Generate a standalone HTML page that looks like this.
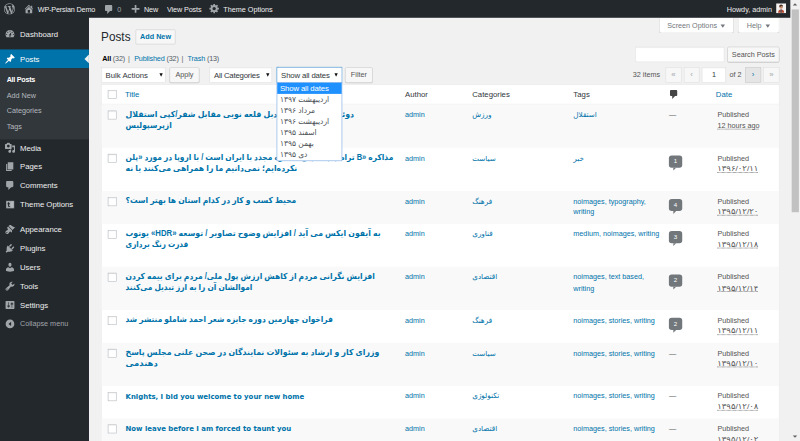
<!DOCTYPE html>
<html lang="en">
<head>
<meta charset="utf-8">
<title>Posts ‹ WP-Persian Demo — WordPress</title>
<style>
html,body{margin:0;padding:0;width:800px;height:441px;overflow:hidden;background:#f1f1f1}
#stage{position:absolute;left:0;top:0;width:1440px;height:794px;transform:scale(.55556);transform-origin:0 0;overflow:hidden;background:#f1f1f1;
 font-family:"Liberation Sans","DejaVu Sans",sans-serif;font-size:13px;line-height:1.4em;color:#444}
#stage *{box-sizing:border-box}
a{color:#0073aa;text-decoration:none}
svg{display:block}

/* ---------- admin bar ---------- */
#bar{position:absolute;left:0;top:0;width:1423px;height:32px;background:#23282d;color:#eee;font-size:13px;line-height:32px;z-index:5}
#bar .it{position:absolute;top:.8px;height:32px;white-space:nowrap;color:#eee}
#bar svg{position:absolute;fill:#a0a5aa}

/* ---------- sidebar ---------- */
#menubg{position:absolute;left:0;top:0;width:160px;height:794px;background:#23282d;z-index:3}
#menu{position:absolute;left:0;top:32px;width:160px;height:762px;background:#23282d;z-index:4}
#menu .mi{position:absolute;left:0;width:160px;height:34px;color:#eee;font-size:14px;line-height:34px}
#menu .mi span{position:absolute;left:36px;top:0;white-space:nowrap}
#menu .mi svg{position:absolute;left:8px;top:7px;width:20px;height:20px;fill:#a0a5aa}
#menu .cur{background:#0073aa;color:#fff}
#menu .cur svg{fill:#fff}
#menu .cur:after{content:"";position:absolute;right:0;top:9px;border:8px solid transparent;border-right-color:#f1f1f1;border-left-width:0}
#sub{position:absolute;left:0;top:91px;width:160px;height:128px;background:#32373c}
#sub a{position:absolute;left:12px;font-size:13px;line-height:18px;color:#b4b9be;white-space:nowrap}
#sub a.on{color:#fff;font-weight:700;letter-spacing:-.5px}

/* ---------- scrollbar ---------- */
#sb{position:absolute;left:1423px;top:0;width:17px;height:794px;background:#f1f1f1;z-index:9}
#sb i{position:absolute;left:2px;top:17px;width:13px;height:365px;background:#c1c1c1}
#sb b{position:absolute;left:4px;width:0;height:0;border:4.5px solid transparent}
#sb b.up{top:6px;border-bottom:4.5px solid #606060;border-top-width:0}
#sb b.dn{bottom:6px;border-top:4.5px solid #606060;border-bottom-width:0}

/* ---------- content ---------- */
.tab{position:absolute;top:32px;height:28px;background:#fff;border:1px solid #ccc;border-top:none;border-radius:0 0 4px 4px;color:#72777c;font-size:13px;line-height:28px;white-space:nowrap}
.tab span{position:absolute;top:0}
.tab em{position:absolute;top:12px;width:0;height:0;border:4.5px solid transparent;border-top:6px solid #72777c;border-bottom-width:0}
h1{position:absolute;left:182px;top:52px;margin:0;font-size:23px;font-weight:400;line-height:29px;color:#23282d;white-space:nowrap}
.pta{position:absolute;left:244px;top:53px;width:72px;height:27px;border:1px solid #ccc;border-radius:2px;background:#f7f7f7;color:#0073aa;font-weight:700;font-size:13px;line-height:25px;text-align:center;white-space:nowrap}
.sss{position:absolute;left:184px;top:93px;letter-spacing:-.27px;font-size:13px;line-height:26px;color:#666;white-space:nowrap;margin:0}
.sss b{color:#000;font-weight:700}
.sss .c{color:#555d66;font-weight:400}
.sss .s{color:#666;padding:0 4.5px 0 2px}
.inp{position:absolute;background:#fff;border:1px solid #ddd;box-shadow:inset 0 1px 2px rgba(0,0,0,.07)}
.btn{position:absolute;height:28px;border:1px solid #ccc;border-radius:3px;background:#f7f7f7;box-shadow:0 1px 0 #ccc;color:#555;font-size:13px;line-height:26px;text-align:center;white-space:nowrap}
.sel{position:absolute;top:121px;height:28px;background:#fff;border:1px solid #ddd;box-shadow:inset 0 1px 2px rgba(0,0,0,.07);color:#32373c;font-size:14px;line-height:26px;white-space:nowrap}
.sel span{position:absolute;left:7px;top:0}
.sel em{position:absolute;right:7px;top:10px;width:0;height:0;border:3.5px solid transparent;border-top:6px solid #111;border-bottom-width:0}
.sel.foc{border-color:#5b9dd9;box-shadow:0 0 2px rgba(30,140,190,.8)}
.pg{position:absolute;top:120.5px;height:28px;border:1px solid #ddd;background:#f7f7f7;color:#a0a5aa;font-size:14px;line-height:24px;text-align:center}
.pg.act{border-color:#ccc;background:#e5e5e5;color:#0073aa}
.t13{position:absolute;font-size:13px;line-height:28px;white-space:nowrap;color:#555}

/* dropdown list */
#dd{position:absolute;left:498px;top:148px;width:118px;height:142px;background:#fff;border:1px solid #6b9fe0;z-index:3;font-size:13.500px;color:#4a4f54}
#dd div{height:20px;line-height:20px;padding-left:5px;white-space:nowrap;text-align:left}
#dd div.hl{background:#1e90ff;color:#fff;font-size:14px;letter-spacing:-.25px}

/* table */
#tbl{position:absolute;left:182px;top:151.7px;width:1221px;border:1px solid #e5e5e5;border-bottom:none;box-shadow:0 1px 1px rgba(0,0,0,.04);background:#fff}
.row{position:relative;width:1219px}
.row.h{height:35.7px;border-bottom:1px solid #e1e1e1;font-size:14px;line-height:20px;color:#32373c}
.row.odd{background:#f9f9f9}
.row.r1{height:58.9px}
.row.r2{height:77.7px}
.row>*{position:absolute;top:8px}
.cb{left:11px;top:11px !important;width:16px;height:16px;border:1px solid #b4b9be;background:#fff;box-shadow:inset 0 1px 2px rgba(0,0,0,.1)}
.row.h .cb{top:9px !important}
.ti{left:43px;width:490px;font-size:14px;font-weight:700;line-height:19.5px;color:#0073aa;white-space:nowrap}
.ti .l{display:inline-block;transform-origin:0 50%}
.ti .l{position:relative;top:-1px}
.ti .en{font-family:"DejaVu Sans",sans-serif;font-size:13.5px;top:0}
.au{left:546px}
.ca{left:667px}
.tg{left:849px;width:165px}
.cm{left:1021px}
.da{left:1108.3px;color:#555}
.row.h .ti{font-weight:400;left:42px}
.row>*{font-size:13px;line-height:19.5px}
.row .ti{font-size:15px}
.row>.au,.row>.ca,.row>.tg,.row>.cm,.row>.da{top:8.8px}
.row.h>*{font-size:14px;line-height:20px;top:7px !important}
.da u{text-decoration:underline dotted;text-decoration-color:#555}
.da u.fa{display:inline-block;font-size:14px;transform:scaleX(1.09);transform-origin:0 50%}
.dash{color:#555}
.bub{display:block;position:relative;margin-top:5px;width:24px;height:22px;border-radius:5px;background:#72777c;color:#fff;font-size:11px;font-weight:400;line-height:21px;text-align:center}
.bub:after{content:"";position:absolute;left:8px;top:22px;border:0 solid transparent;border-top:5px solid #72777c;border-right-width:5px}
</style>
</head>
<body>
<div id="stage">

<!-- admin bar -->
<div id="bar">
  <svg style="left:7px;top:6px;width:20px;height:20px" viewBox="0 0 20 20"><path d="M20 10c0-5.51-4.49-10-10-10C4.48 0 0 4.49 0 10c0 5.52 4.48 10 10 10 5.51 0 10-4.48 10-10zM7.78 15.37L4.37 6.22c.55-.02 1.17-.08 1.17-.08.5-.06.44-1.13-.06-1.11 0 0-1.45.11-2.37.11-.18 0-.37 0-.58-.01C4.12 2.69 6.87 1.11 10 1.11c2.33 0 4.45.87 6.05 2.34-.68-.11-1.65.39-1.65 1.58 0 .74.45 1.36.9 2.1.35.61.55 1.36.55 2.46 0 1.49-1.4 5-1.4 5l-3.03-8.37c.54-.02.82-.17.82-.17.5-.05.44-1.25-.06-1.22 0 0-1.44.12-2.38.12-.87 0-2.33-.12-2.33-.12-.5-.03-.56 1.2-.06 1.22l.92.08 1.26 3.41zM17.41 10c.24-.64.74-1.87.43-4.25.7 1.29 1.05 2.71 1.05 4.25 0 3.29-1.73 6.24-4.4 7.78.97-2.59 1.94-5.2 2.92-7.78zM6.1 18.09C3.12 16.65 1.11 13.53 1.11 10c0-1.3.23-2.48.72-3.59C3.25 10.3 4.67 14.2 6.1 18.09zm4.03-6.63l2.58 6.98c-.86.29-1.76.45-2.71.45-.79 0-1.57-.11-2.29-.33.81-2.38 1.62-4.74 2.42-7.1z"/></svg>
  <svg style="left:42px;top:6px;width:20px;height:20px" viewBox="0 0 20 20"><path d="M16 8.5l1.53 1.53-1.06 1.06L10 4.62l-6.47 6.47-1.06-1.06L10 2.5l4 4v-2h2v4zm-6-2.46l6 5.99V18H4v-5.97zM12 17v-5H8v5h4z"/></svg>
  <span class="it" style="left:68px;letter-spacing:-.3px">WP-Persian Demo</span>
  <svg style="left:186px;top:7px;width:20px;height:20px" viewBox="0 0 20 20"><path d="M5 2h9c1.1 0 2 .9 2 2v7c0 1.1-.9 2-2 2h-2l-5 5v-5H5c-1.1 0-2-.9-2-2V4c0-1.1.9-2 2-2z"/></svg>
  <span class="it" style="left:211px;color:#a0a5aa">0</span>
  <svg style="left:234px;top:6px;width:20px;height:20px" viewBox="0 0 20 20"><path d="M17 8.5v3h-5.500v5.500h-3v-5.500H3v-3h5.500V3h3v5.500z"/></svg>
  <span class="it" style="left:259px">New</span>
  <span class="it" style="left:300.5px;letter-spacing:-.2px">View Posts</span>
  <svg style="left:376px;top:5px;width:20px;height:20px" viewBox="0 0 20 20"><path d="M18 12h-2.180c-.170.700-.440 1.350-.810 1.930l1.540 1.540-2.100 2.100-1.540-1.540c-.580.360-1.230.630-1.910.790V19H8v-2.180c-.68-.16-1.33-.43-1.910-.79l-1.540 1.540-2.120-2.120 1.540-1.540c-.36-.58-.63-1.230-.79-1.910H1V9.030h2.170c.16-.7.44-1.350.8-1.940L2.430 5.550l2.100-2.100 1.540 1.540c.58-.37 1.240-.64 1.930-.81V2h3v2.180c.68.160 1.330.430 1.910.790l1.540-1.540 2.120 2.120-1.540 1.540c.360.590.640 1.240.800 1.940H18V12zm-8.500 1.500c1.660 0 3-1.340 3-3s-1.340-3-3-3-3 1.340-3 3 1.340 3 3 3z"/></svg>
  <span class="it" style="left:402px">Theme Options</span>
  <span class="it" style="left:1308px">Howdy, admin</span>
  <svg style="left:1397px;top:6px;width:18px;height:18px" viewBox="0 0 18 18"><rect width="18" height="18" fill="#f4f2f0"/><path d="M3.500 17c0-4 2-6 5.500-6s5.500 2 5.500 6z" fill="#b3492e"/><path d="M8 11h2l-.3 6H8.300z" fill="#3d5a80"/><circle cx="9" cy="6.500" r="3.200" fill="#c48a6a"/><path d="M5.600 6.200c0-2.600 1.500-3.900 3.400-3.900s3.400 1.300 3.400 3.900c-1-.3-1.600-1.200-1.900-1.900-1 .9-3 1.600-4.900 1.900z" fill="#3b2a24"/></svg>
</div>

<!-- sidebar -->
<div id="menubg"></div>
<div id="menu">
  <div class="mi" style="top:12px"><svg viewBox="0 0 20 20"><path d="M3.760 16h12.480c1.100-1.370 1.760-3.110 1.760-5 0-4.420-3.580-8-8-8s-8 3.580-8 8c0 1.890.66 3.630 1.760 5zM10 4c.55 0 1 .45 1 1s-.45 1-1 1-1-.45-1-1 .45-1 1-1zM6 6c.55 0 1 .45 1 1s-.45 1-1 1-1-.45-1-1 .45-1 1-1zm8 0c.55 0 1 .45 1 1s-.45 1-1 1-1-.45-1-1 .45-1 1-1zm-5.370 5.550L12 7v6c0 1.100-.9 2-2 2s-2-.9-2-2c0-.57.24-1.080.63-1.450zM4 10c.55 0 1 .45 1 1s-.45 1-1 1-1-.45-1-1 .45-1 1-1zm12 0c.55 0 1 .45 1 1s-.45 1-1 1-1-.45-1-1 .45-1 1-1zm-5 3c0-.55-.45-1-1-1s-1 .45-1 1 .45 1 1 1 1-.45 1-1z"/></svg><span>Dashboard</span></div>
  <div class="mi cur" style="top:57px"><svg viewBox="0 0 20 20"><path d="M10.440 3.020l1.820-1.820 6.360 6.350-1.830 1.820c-1.050-.68-2.480-.57-3.410.36l-.75.75c-.92.93-1.040 2.350-.35 3.410l-1.830 1.820-2.410-2.410-2.800 2.790c-.42.42-3.380 2.710-3.800 2.290s1.860-3.390 2.280-3.810l2.790-2.790L4.100 9.360l1.830-1.820c1.050.69 2.480.57 3.400-.36l.75-.75c.93-.92 1.050-2.350.36-3.410z"/></svg><span>Posts</span></div>
  <div id="sub">
    <a class="on" style="top:12px">All Posts</a>
    <a style="top:40px">Add New</a>
    <a style="top:68px">Categories</a>
    <a style="top:96px">Tags</a>
  </div>
  <div class="mi" style="top:217px"><svg viewBox="0 0 20 20"><path d="M13 11V4c0-.55-.45-1-1-1h-1.670L9 1H5L3.670 3H2c-.55 0-1 .45-1 1v7c0 .55.45 1 1 1h10c.55 0 1-.45 1-1zM7 4.500c1.380 0 2.500 1.120 2.500 2.500S8.380 9.500 7 9.500 4.500 8.380 4.500 7 5.620 4.500 7 4.500zM14 6h5v10.500c0 1.380-1.120 2.500-2.500 2.500S14 17.880 14 16.500s1.120-2.500 2.500-2.500c.17 0 .34.020.5.050V9h-3V6zm-4 8.050V13h2v3.500c0 1.380-1.120 2.500-2.500 2.500S7 17.880 7 16.500 8.120 14 9.500 14c.17 0 .34.020.5.050z"/></svg><span>Media</span></div>
  <div class="mi" style="top:251px"><svg viewBox="0 0 20 20"><path d="M6 15V2h10v13H6zm-1 1h8v2H3V5h2v11z"/></svg><span>Pages</span></div>
  <div class="mi" style="top:285px"><svg viewBox="0 0 20 20"><path d="M5 2h9c1.100 0 2 .9 2 2v7c0 1.100-.9 2-2 2h-2l-5 5v-5H5c-1.100 0-2-.9-2-2V4c0-1.100.9-2 2-2z"/></svg><span>Comments</span></div>
  <div class="mi" style="top:319px"><svg viewBox="0 0 20 20"><rect x="3" y="3.500" width="14.500" height="13.500" fill="#9ea3a8"/><rect x="11" y="5" width="5" height="10.500" fill="#b4b9be"/><path d="M6.500 6h1.800v2h1.700v1.500H8.300v3.200h1.900v1.600H6.500V9.500H5.500V8h1z" fill="#23282d"/></svg><span>Theme Options</span></div>
  <div class="mi" style="top:363.7px"><svg viewBox="0 0 20 20"><path d="M14.480 11.060L7.410 3.990l1.500-1.500c.5-.56 2.300-.47 3.510.32 1.210.8 1.430 1.280 2.910 2.100 1.180.64 2.450 1.260 4.450.85zm-.71.71L6.700 4.700 4.930 6.470c-.39.39-.39 1.020 0 1.410l1.060 1.060c.39.39.39 1.030 0 1.420-.6.6-1.430 1.110-2.210 1.690-.35.26-.7.53-1.010.84-1.340 1.340-1.370 3.350-.19 4.530s3.190 1.150 4.530-.19c.31-.31.58-.66.85-1.020.57-.77 1.080-1.600 1.690-2.200.39-.39 1.020-.39 1.410 0l1.060 1.060c.39.39 1.020.39 1.410 0zM5.030 16.500c-.39.39-1.030.39-1.420 0s-.39-1.020 0-1.410c.39-.39 1.030-.39 1.420 0 .39.39.39 1.020 0 1.410z"/></svg><span>Appearance</span></div>
  <div class="mi" style="top:397.7px"><svg viewBox="0 0 20 20"><path d="M13.110 4.360L9.870 7.600 8 5.730l3.240-3.240c.35-.34 1.050-.2 1.560.32.52.51.66 1.210.31 1.550zm-8 1.770l.91-1.120 9.010 9.010-1.190.84c-.71.71-2.630 1.160-3.820 1.160H6.140L4.900 17.260c-.59.59-1.540.59-2.120 0-.59-.58-.59-1.530 0-2.120L4.020 13.900v-3.880c0-1.130.39-3.190 1.090-3.890zm7.260 3.970l3.240-3.240c.34-.35 1.040-.21 1.550.31.52.51.66 1.210.31 1.550l-3.240 3.250z"/></svg><span>Plugins</span></div>
  <div class="mi" style="top:431.7px"><svg viewBox="0 0 20 20"><path d="M10 9.250c-2.270 0-2.730-3.440-2.730-3.440C7 4.020 7.820 2 9.970 2c2.160 0 2.980 2.020 2.710 3.810 0 0-.41 3.440-2.680 3.440zm0 2.570L12.720 10c2.390 0 4.520 2.330 4.520 4.530v2.490s-3.650 1.130-7.240 1.130c-3.650 0-7.240-1.130-7.240-1.130v-2.490c0-2.250 1.940-4.480 4.470-4.480z"/></svg><span>Users</span></div>
  <div class="mi" style="top:466px"><svg viewBox="0 0 20 20"><path d="M16.680 9.770c-1.340 1.340-3.300 1.670-4.950.99l-5.410 6.520c-.99.99-2.590.99-3.580 0s-.99-2.590 0-3.570l6.520-5.420c-.68-1.650-.35-3.610.99-4.950 1.280-1.280 3.120-1.620 4.720-1.060l-2.890 2.890 2.820 2.820 2.860-2.870c.53 1.580.18 3.390-1.080 4.650zM3.810 16.210c.4.39 1.040.39 1.430 0 .4-.4.4-1.040 0-1.430-.39-.4-1.030-.4-1.430 0-.39.39-.39 1.030 0 1.430z"/></svg><span>Tools</span></div>
  <div class="mi" style="top:500px"><svg viewBox="0 0 20 20"><path d="M18 16V4c0-.55-.45-1-1-1H3c-.55 0-1 .45-1 1v12c0 .55.45 1 1 1h14c.55 0 1-.45 1-1zM8 11h1c.55 0 1 .45 1 1s-.45 1-1 1H8v1.500c0 .28-.22.5-.5.5s-.5-.22-.5-.5V13H6c-.55 0-1-.45-1-1s.45-1 1-1h1V5.500c0-.28.22-.5.5-.5s.5.220.5.500V11zm5-2h-1c-.55 0-1-.45-1-1s.45-1 1-1h1V5.500c0-.28.22-.5.5-.5s.5.220.5.500V7h1c.55 0 1 .45 1 1s-.45 1-1 1h-1v5.500c0 .28-.22.5-.5.5s-.5-.22-.5-.5V9z"/></svg><span>Settings</span></div>
  <div class="mi" style="top:533.5px;font-size:13px;color:#a0a5aa"><svg viewBox="0 0 20 20"><path d="M10 2.160c4.330 0 7.840 3.510 7.840 7.840s-3.510 7.840-7.840 7.840S2.160 14.330 2.160 10 5.670 2.160 10 2.160zm2 11.720V6.120L7.220 10z"/></svg><span>Collapse menu</span></div>
</div>

<!-- scrollbar -->
<div id="sb"><b class="up"></b><i></i><b class="dn"></b></div>

<!-- screen meta tabs -->
<div class="tab" style="left:1186px;width:135px"><span style="left:14px">Screen Options</span><em style="left:110px"></em></div>
<div class="tab" style="left:1328px;width:75px"><span style="left:15px">Help</span><em style="left:49px"></em></div>

<h1><span style="display:inline-block;transform:scaleX(.92);transform-origin:0 50%">Posts</span></h1>
<a class="pta">Add New</a>

<p class="sss"><b>All</b> <span class="c">(32)</span> <span class="s">|</span> <a>Published <span class="c">(32)</span></a> <span class="s">|</span> <a>Trash <span class="c">(13)</span></a></p>

<div class="inp" style="left:1143px;top:84px;width:161px;height:28px"></div>
<div class="btn" style="left:1309px;top:84px;width:94px">Search Posts</div>

<div class="sel" style="left:182px;width:116px"><span>Bulk Actions</span><em style="right:4px"></em></div>
<div class="btn" style="left:305px;top:121px;width:54px">Apply</div>
<div class="sel" style="left:377px;width:113px"><span style="letter-spacing:-.35px">All Categories</span><em style="right:4.5px"></em></div>
<div class="sel foc" style="left:498px;width:118px"><span style="letter-spacing:-.25px">Show all dates</span><em></em></div>
<div class="btn" style="left:621px;top:121px;width:50px">Filter</div>

<span class="t13" style="left:1139px;top:120px">32 items</span>
<div class="pg" style="left:1198px;width:28.5px">«</div>
<div class="pg" style="left:1230.5px;width:28.5px">‹</div>
<div class="inp" style="left:1263px;top:120.5px;width:44px;height:28px;text-align:center;font-size:13px;line-height:26px;color:#32373c">1</div>
<span class="t13" style="left:1313px;top:120px">of 2</span>
<div class="pg act" style="left:1341px;width:29px">›</div>
<div class="pg" style="left:1374px;width:29px">»</div>

<!-- table -->
<div id="tbl">
  <div class="row h"><i class="cb"></i><a class="ti"><span class="l">Title</span></a><span class="au">Author</span><span class="ca">Categories</span><span class="tg">Tags</span>
    <svg class="cm" style="top:7px;left:1020px;width:20px;height:20px;fill:#444" viewBox="0 0 20 20"><path d="M5 2h9c1.100 0 2 .9 2 2v7c0 1.100-.9 2-2 2h-2l-5 5v-5H5c-1.100 0-2-.9-2-2V4c0-1.100.9-2 2-2z"/></svg>
    <a class="da" style="color:#0073aa;left:1105.5px">Date</a></div>

  <div class="row r2 odd"><i class="cb"></i><a class="ti"><span class="l" style="transform:scaleX(0.936)">دوئل شاگرد و استاد/دبل قلعه نویی مقابل شفر/کپی استقلال</span><br><span class="l" style="transform:scaleX(0.905)">ازپرسپولیس</span></a><a class="au">admin</a><a class="ca">ورزش</a><a class="tg">استقلال</a><span class="cm dash">—</span><span class="da">Published<br><u>12 hours ago</u></span></div>

  <div class="row r2"><i class="cb"></i><a class="ti"><span class="l" style="transform:scaleX(0.899)">ترامپ به دنبال مذاکره مجدد با ایران است / با اروپا در مورد «پلن B» مذاکره</span><br><span class="l" style="transform:scaleX(0.924)">نکرده‌ایم؛ نمی‌دانیم ما را همراهی می‌کنند یا نه</span></a><a class="au">admin</a><a class="ca">سیاست</a><a class="tg">خبر</a><span class="cm"><b class="bub">1</b></span><span class="da">Published<br><u class="fa">۱۳۹۶/۰۲/۱۱</u></span></div>

  <div class="row r1 odd"><i class="cb"></i><a class="ti"><span class="l" style="transform:scaleX(0.910)">محیط کسب و کار در کدام استان ها بهتر است؟</span></a><a class="au">admin</a><a class="ca">فرهنگ</a><a class="tg">noimages, typography, writing</a><span class="cm"><b class="bub">4</b></span><span class="da">Published<br><u class="fa">۱۳۹۵/۱۲/۲۰</u></span></div>

  <div class="row r2"><i class="cb"></i><a class="ti"><span class="l" style="transform:scaleX(0.930)">یوتوب «HDR» به آیفون ایکس می آید / افزایش وضوح تصاویر / توسعه</span><br><span class="l" style="transform:scaleX(0.866)">قدرت رنگ برداری</span></a><a class="au">admin</a><a class="ca">فناوری</a><a class="tg">medium, noimages, writing</a><span class="cm"><b class="bub">3</b></span><span class="da">Published<br><u class="fa">۱۳۹۵/۱۲/۱۸</u></span></div>

  <div class="row r2 odd"><i class="cb"></i><a class="ti"><span class="l" style="transform:scaleX(0.906)">افزایش نگرانی مردم از کاهش ارزش پول ملی/ مردم برای بیمه کردن</span><br><span class="l" style="transform:scaleX(0.892)">اموالشان آن را به ارز تبدیل می‌کنند</span></a><a class="au">admin</a><a class="ca">اقتصادی</a><a class="tg">noimages, text based, writing</a><span class="cm"><b class="bub">2</b></span><span class="da">Published<br><u class="fa">۱۳۹۵/۱۲/۱۴</u></span></div>

  <div class="row r1"><i class="cb"></i><a class="ti"><span class="l" style="transform:scaleX(0.896)">فراخوان چهارمین دوره جایزه شعر احمد شاملو منتشر شد</span></a><a class="au">admin</a><a class="ca">فرهنگ</a><a class="tg">noimages, stories, writing</a><span class="cm"><b class="bub">2</b></span><span class="da">Published<br><u class="fa">۱۳۹۵/۱۲/۱۱</u></span></div>

  <div class="row r2 odd"><i class="cb"></i><a class="ti"><span class="l" style="transform:scaleX(0.936)">وزرای کار و ارشاد به سئوالات نمایندگان در صحن علنی مجلس پاسخ</span><br><span class="l" style="transform:scaleX(1.012)">دهندمی</span></a><a class="au">admin</a><a class="ca">سیاست</a><a class="tg">noimages, stories, writing</a><span class="cm dash">—</span><span class="da">Published<br><u class="fa">۱۳۹۵/۱۲/۱۰</u></span></div>

  <div class="row r1"><i class="cb"></i><a class="ti"><span class="l en" style="transform:scaleX(0.924)">Knights, I bid you welcome to your new home</span></a><a class="au">admin</a><a class="ca">تکنولوژی</a><a class="tg">noimages, stories, writing</a><span class="cm dash">—</span><span class="da">Published<br><u class="fa">۱۳۹۵/۱۲/۰۸</u></span></div>

  <div class="row r1 odd"><i class="cb"></i><a class="ti"><span class="l en" style="transform:scaleX(0.924)">Now leave before I am forced to taunt you</span></a><a class="au">admin</a><a class="ca">اقتصادی</a><a class="tg">noimages, stories, writing</a><span class="cm dash">—</span><span class="da">Published<br><u class="fa">۱۳۹۵/۱۲/۰۲</u></span></div>
</div>

<!-- open dropdown -->
<div id="dd">
  <div class="hl">Show all dates</div>
  <div>اردیبهشت ۱۳۹۷</div>
  <div>مرداد ۱۳۹۶</div>
  <div>اردیبهشت ۱۳۹۶</div>
  <div>اسفند ۱۳۹۵</div>
  <div>بهمن ۱۳۹۵</div>
  <div>دی ۱۳۹۵</div>
</div>

</div>
</body>
</html>
